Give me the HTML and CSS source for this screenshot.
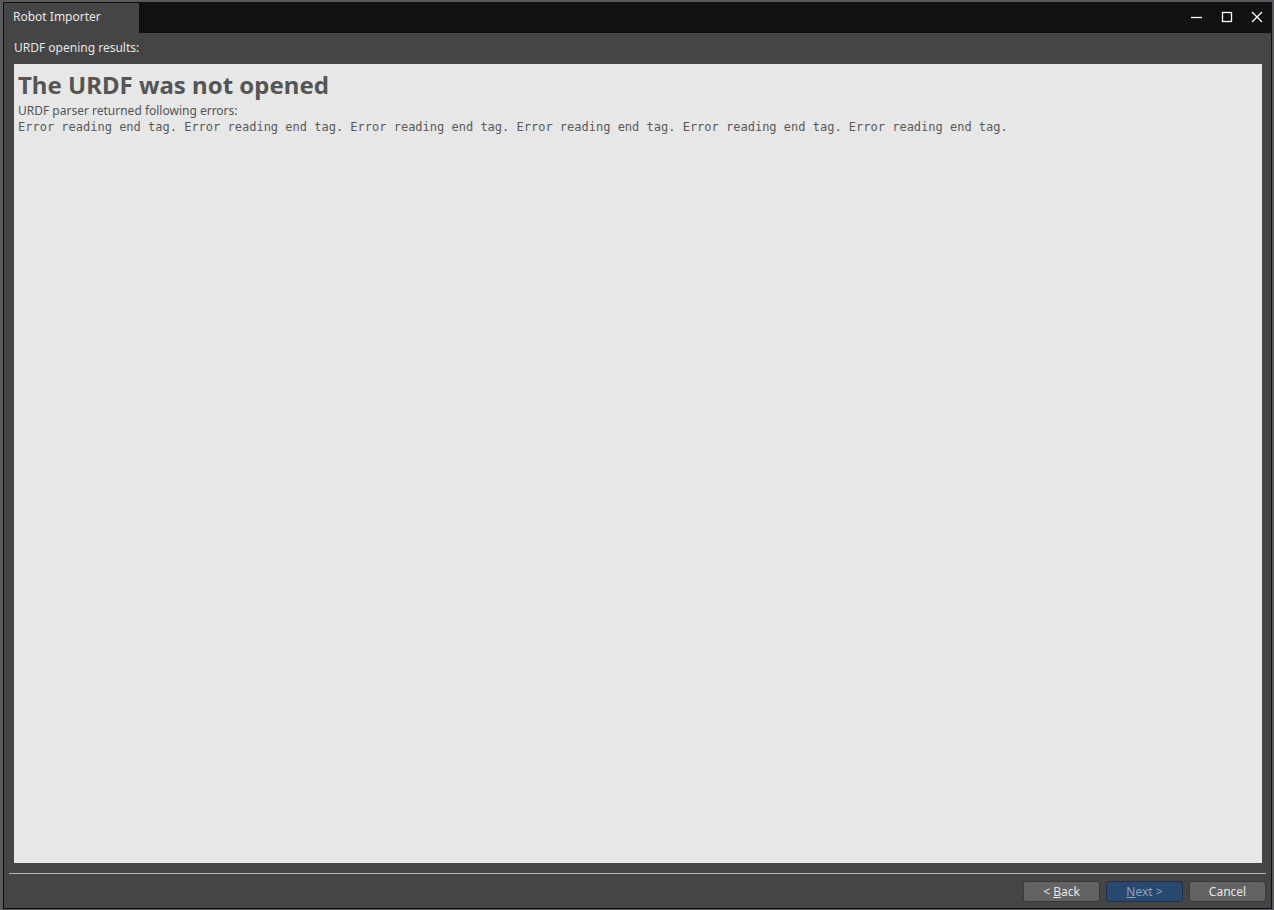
FILE: index.html
```html
<!DOCTYPE html>
<html>
<head>
<meta charset="utf-8">
<link rel="stylesheet" href="styles.css">
</head>
<body>
<div class="window">
  <div class="titlebar">
    <div class="tab">Robot Importer</div>
    <div class="title-fill"></div>
    <div class="controls">
      <svg class="ctl" width="14" height="14" viewBox="0 0 14 14"><path d="M1 7.5H12" stroke="#fff" stroke-width="1.3"/></svg>
      <svg class="ctl" width="14" height="14" viewBox="0 0 14 14"><rect x="2.5" y="2.5" width="9" height="9" fill="none" stroke="#fff" stroke-width="1.3"/></svg>
      <svg class="ctl" width="14" height="14" viewBox="0 0 14 14"><path d="M2 2L12 12M12 2L2 12" stroke="#fff" stroke-width="1.3"/></svg>
    </div>
  </div>
  <div class="body">
    <div class="subtitle">URDF opening results:</div>
    <div class="panel">
      <h1>The URDF was not opened</h1>
      <div class="note">URDF parser returned following errors:</div>
      <div class="errors">Error reading end tag. Error reading end tag. Error reading end tag. Error reading end tag. Error reading end tag. Error reading end tag.</div>
    </div>
    <div class="separator"></div>
    <div class="buttons">
      <button class="btn">&lt; <u>B</u>ack</button>
      <button class="btn primary"><u>N</u>ext &gt;</button>
      <button class="btn">Cancel</button>
    </div>
  </div>
</div>
</body>
</html>
```
FILE: styles.css
```css
html, body {
  margin: 0;
  padding: 0;
  height: 100%;
}
body {
  background: #5a5a5e;
  font-family: "Noto Sans", "Open Sans", sans-serif;
  padding: 2px 2px 1px 3px;
  box-sizing: border-box;
  overflow: hidden;
}
.window {
  height: 907px;
  width: 1269px;
  border: 1px solid #101010;
  background: #454545;
  box-sizing: border-box;
  display: flex;
  flex-direction: column;
}
.titlebar {
  display: flex;
  height: 30px;
  background: #111111;
  flex: none;
}
.tab {
  width: 135px;
  background: #454545;
  color: #e6e6e6;
  font-size: 12px;
  line-height: 28px;
  padding-left: 9px;
  box-sizing: border-box;
}
.title-fill {
  flex: 1;
}
.controls {
  display: flex;
  align-items: center;
  gap: 16px;
  padding-right: 7px;
  padding-bottom: 2px;
}
.ctl {
  display: block;
}
.body {
  flex: 1;
  display: flex;
  flex-direction: column;
  padding: 0 5px 6px 5px;
}
.subtitle {
  color: #e6e6e6;
  font-size: 12px;
  height: 31px;
  line-height: 30px;
  padding-left: 5px;
}
.panel {
  flex: 1;
  margin: 0 4px 0 5px;
  background: #e7e7e7;
  padding: 4px 4px;
  color: #555555;
}
h1 {
  margin: 0 0 1px 0;
  font-size: 24px;
  font-weight: bold;
  line-height: 34px;
  color: #555555;
}
.note {
  font-size: 12px;
  line-height: 16px;
}
.errors {
  font-family: "DejaVu Sans Mono", monospace;
  font-size: 12px;
  line-height: 16px;
  color: #5a5a5a;
}
.separator {
  height: 1px;
  background: #b4b4b4;
  margin: 10px 0 7px 0;
}
.buttons {
  display: flex;
  justify-content: flex-end;
  gap: 6px;
}
.btn {
  width: 77px;
  height: 21px;
  border: 1px solid #3a3a3a;
  border-radius: 3px;
  background: #636363;
  color: #e6e6e6;
  font-family: "Noto Sans", sans-serif;
  font-size: 12px;
  padding: 0;
  line-height: 19px;
}
.btn u {
  text-decoration-thickness: 1px;
}
.btn.primary {
  background: #284870;
  border-color: #1e3048;
  color: #8fa2bb;
}
```
